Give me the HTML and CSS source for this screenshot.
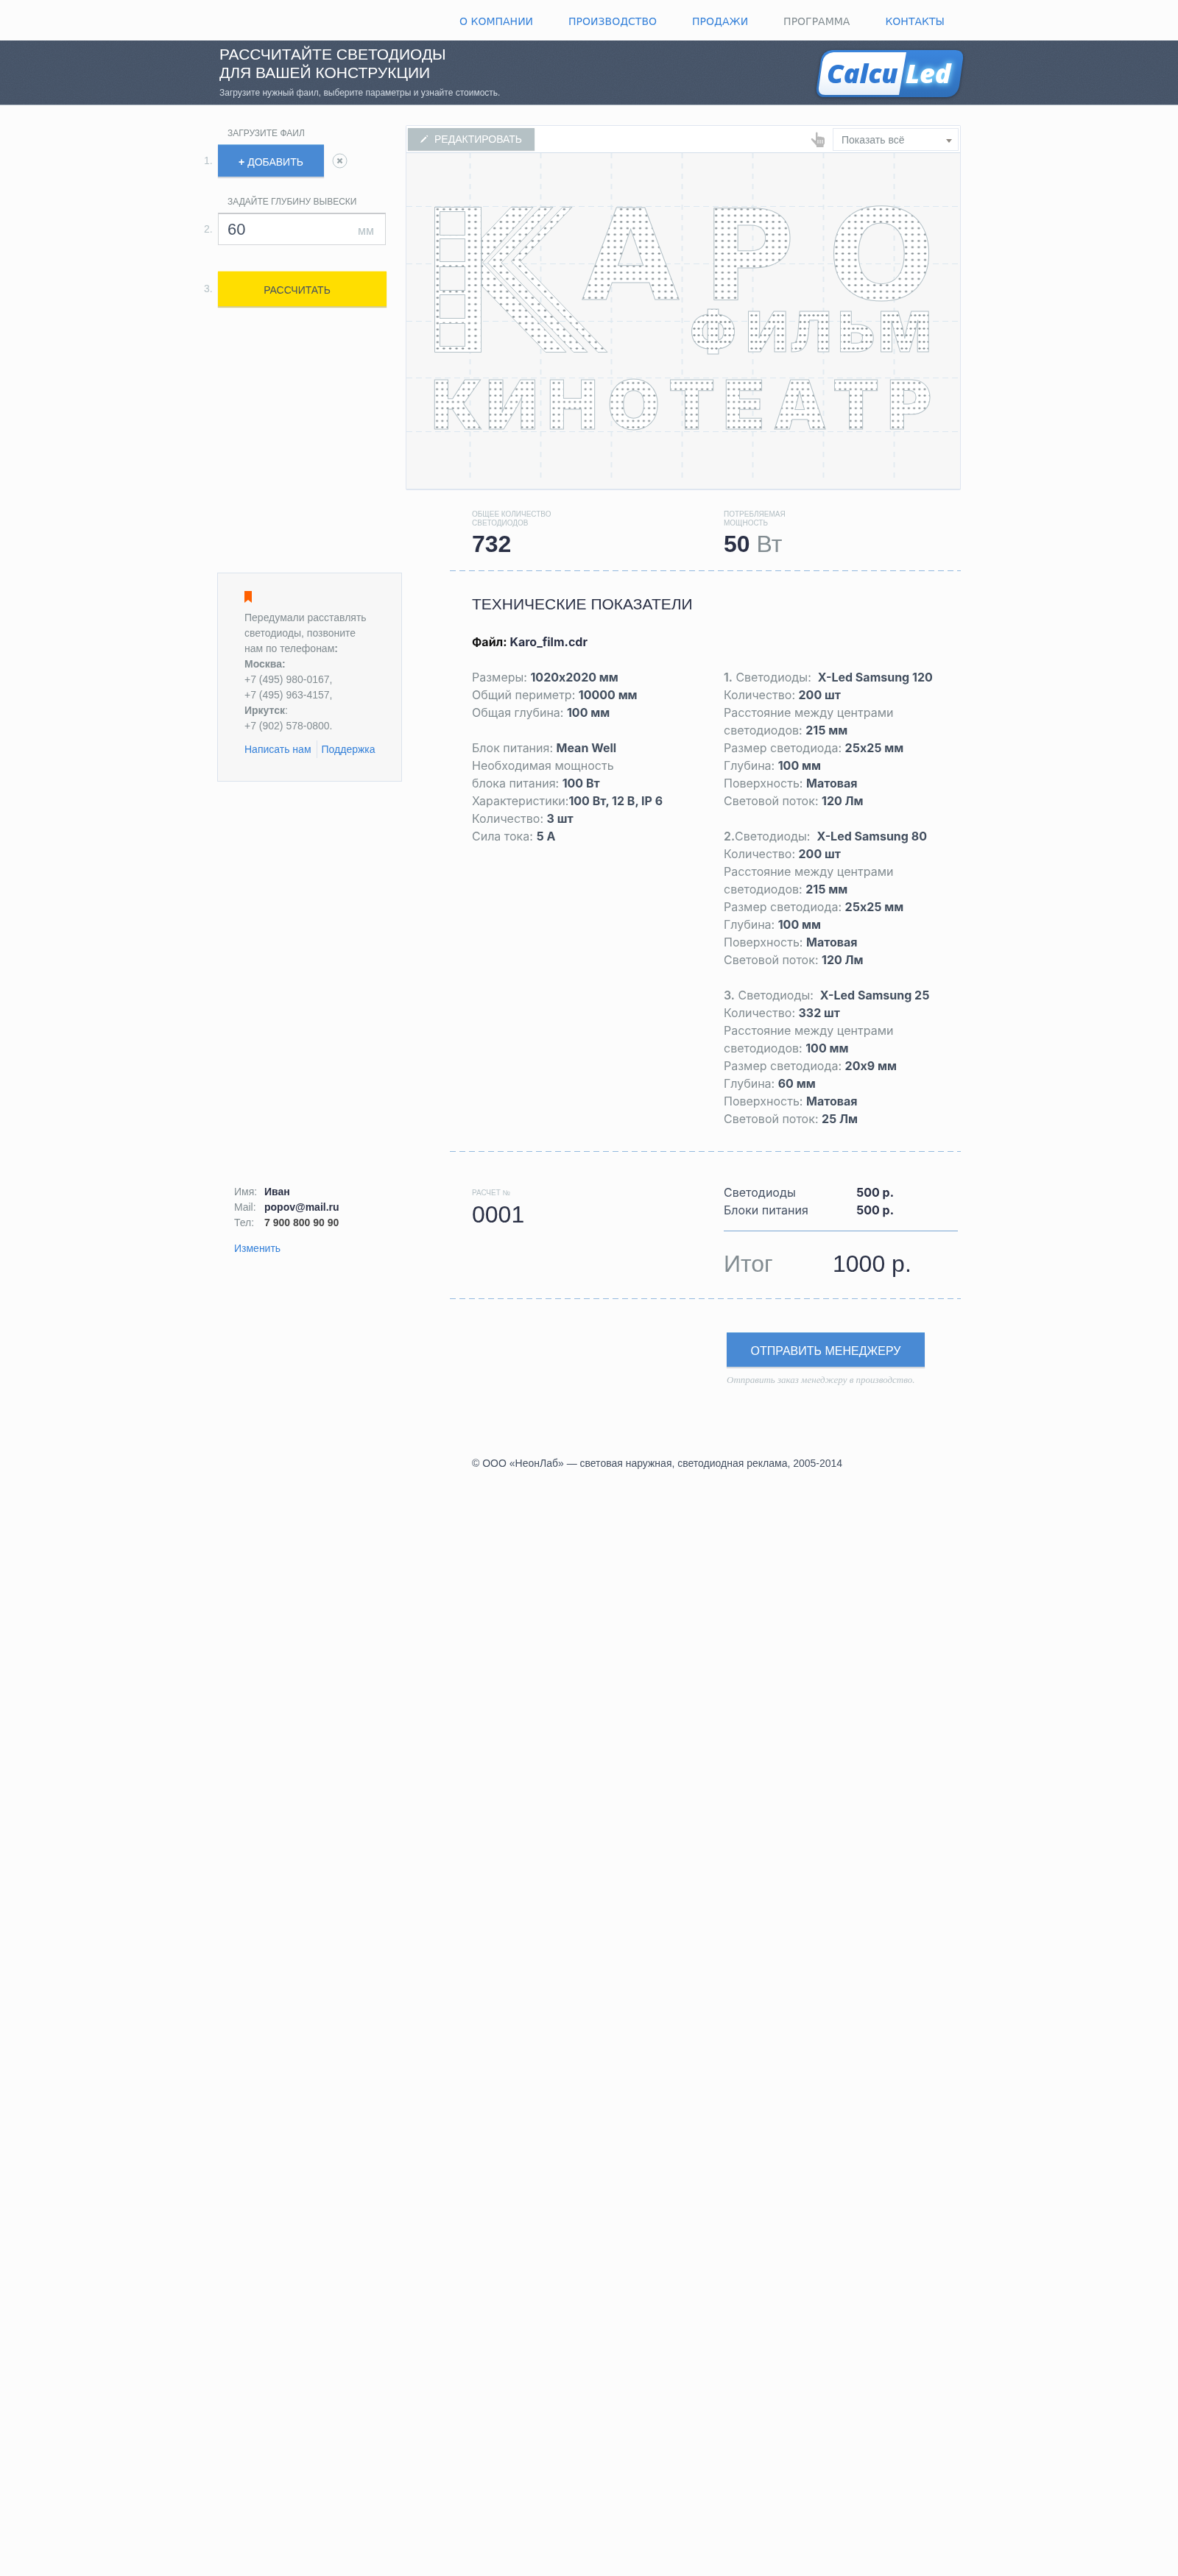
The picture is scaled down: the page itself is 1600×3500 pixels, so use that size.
FILE: index.html
```html
<!DOCTYPE html>
<html lang="ru">
<head>
<meta charset="utf-8">
<meta name="viewport" content="width=device-width, initial-scale=1">
<title>CalcuLed</title>
<link rel="stylesheet" href="styles.css">
</head>
<body>
<nav class="nav wrap">
  <a href="#">О КОМПАНИИ</a>
  <a href="#">ПРОИЗВОДСТВО</a>
  <a href="#">ПРОДАЖИ</a>
  <a href="#" class="current">ПРОГРАММА</a>
  <a href="#">КОНТАКТЫ</a>
</nav>

<header class="hero">
  <svg class="grain" aria-hidden="true">
    <filter id="grain"><feTurbulence type="fractalNoise" baseFrequency="0.7" numOctaves="2"/><feColorMatrix type="saturate" values="0"/></filter>
    <rect width="100%" height="100%" filter="url(#grain)"/>
  </svg>
  <div class="wrap hero-in">
    <div>
      <h1>РАССЧИТАЙТЕ СВЕТОДИОДЫ<br>ДЛЯ ВАШЕЙ КОНСТРУКЦИИ</h1>
      <p>Загрузите нужный фаил, выберите параметры и узнайте стоимость.</p>
    </div>
    <svg class="logo" width="202" height="68" viewBox="0 0 202 68" role="img" aria-label="CalcuLed">
      <defs>
        <linearGradient id="lb" x1="0" y1="0" x2="0" y2="1"><stop offset="0" stop-color="#3b86de"/><stop offset="1" stop-color="#2f6fb9"/></linearGradient>
        <linearGradient id="lw" x1="0" y1="0" x2="0" y2="1"><stop offset=".5" stop-color="#fff"/><stop offset="1" stop-color="#e4eef9"/></linearGradient>
        <filter id="glow" x="-30%" y="-40%" width="160%" height="180%"><feGaussianBlur stdDeviation="3.5"/></filter>
      </defs>
      <path fill="url(#lb)" d="M22 1H190Q201 1 200 13L195 49Q192 64 178 65H12Q0 65 1 52L7 14Q10 2 22 1Z"/>
      <path fill="url(#lw)" d="M24 4H123L113 62H13Q3 62 4 52L9 17Q12 5 24 4Z"/>
      <text class="logo-a" x="15" y="46">Calcu</text>
      <text class="logo-glow" x="122" y="46" filter="url(#glow)">Led</text>
      <text class="logo-b" x="122" y="46">Led</text>
    </svg>
  </div>
</header>

<main class="wrap main">
  <form class="steps">
    <label for="file" class="cap">ЗАГРУЗИТЕ ФАИЛ</label>
    <div class="step">
      <span class="num">1.</span>
      <button type="button" id="file" class="btn add"><b>+</b> ДОБАВИТЬ</button>
      <button type="button" class="clear" aria-label="Удалить">
        <svg width="21" height="21" viewBox="0 0 21 21"><circle cx="10.500" cy="10.500" r="9.500" fill="none" stroke="#b7c4c9"/><path d="M7.500 7.500l6 6m0-6l-6 6" stroke="#9aa6aa" stroke-width="2.200"/></svg>
      </button>
    </div>
    <label for="depth" class="cap">ЗАДАЙТЕ ГЛУБИНУ ВЫВЕСКИ</label>
    <div class="step">
      <span class="num">2.</span>
      <div class="field"><input id="depth" type="text" value="60"><span>мм</span></div>
    </div>
    <div class="step last">
      <span class="num">3.</span>
      <button type="submit" class="btn calc">РАССЧИТАТЬ</button>
    </div>
  </form>

  <div class="result">
    <section class="board">
      <div class="tools">
        <button type="button" class="edit">
          <svg width="12" height="12" viewBox="0 0 12 12"><path d="M1 11l1-2.500 6-6 1.500 1.500-6 6zM9 1.500l1-1 1.500 1.500-1 1z" fill="#fff"/></svg>РЕДАКТИРОВАТЬ</button>
        <svg class="hand" width="20" height="21" viewBox="0 0 20 21"><path fill="#b9b9b9" d="M7 1.500Q8.500-.5 9.500 1.500V7Q11 5.500 12.500 7 14 6 15.500 7.500 18 6.500 19 9.500V16L17.500 18.500V21H8V19L1 11Q0 8.500 2.500 9L6 12 7 12Z"/><path d="M10 11v5M13 11v5M16 11v5" stroke="#fff"/></svg>
        <div class="pick"><select aria-label="Показать"><option>Показать всё</option></select></div>
      </div>
      <svg class="canvas" viewBox="552 208 752 456" role="img" aria-label="КАРО ФИЛЬМ КИНОТЕАТР">
        <defs>
          <pattern id="d1" x="590" y="280" width="8.600" height="8.600" patternUnits="userSpaceOnUse"><rect width="9" height="9" fill="#fff"/><ellipse cx="4.300" cy="4.300" rx="1.700" ry="1.200" fill="#828c91"/></pattern>
          <pattern id="d2" x="1012" y="424" width="6" height="9" patternUnits="userSpaceOnUse"><rect width="6" height="9" fill="#fff"/><ellipse cx="3" cy="4.500" rx="1.600" ry="1.200" fill="#828c91"/></pattern>
          <pattern id="d3" x="590" y="516" width="7.200" height="8.600" patternUnits="userSpaceOnUse"><rect width="8" height="9" fill="#fff"/><ellipse cx="3.600" cy="4.300" rx="1.500" ry="1.300" fill="#828c91"/></pattern>
        </defs>
        <g class="gridv"><path d="M638.500 208v448M734.500 208v448M830.500 208v448M926.500 208v448M1022.500 208v448M1118.500 208v448M1214.500 208v448"/></g>
        <g class="gridh"><path d="M552 280.500h750M552 358.500h750M552 436.500h750M552 513.500h750M552 586.500h750"/></g>
        <g fill="url(#d1)" stroke="#b4c1c7">
          <path d="M654 324L694 281.500H724L655.500 357 769 478.500H741L654 388Z"/>
          <rect x="590.500" y="281.500" width="63" height="197"/>
          <path d="M662.500 357L734 281.500H751L681 357 798 478.500H779Z"/>
          <path d="M694.500 355L764 281.500H777L707 355 825 478.500H812Z"/>
        </g>
        <g fill="#f7f7f7" stroke="#b4c1c7"><rect x="597.500" y="287.500" width="34" height="32"/><rect x="597.500" y="324.500" width="34" height="31"/><rect x="597.500" y="362.500" width="34" height="32"/><rect x="597.500" y="400.500" width="34" height="32"/><rect x="597.500" y="439.500" width="34" height="31"/></g>
        <text class="sign big" x="790 954 1124" y="407">АРО</text>
        <text class="sign mid" x="937 1013 1073 1138 1193" y="478">ФИЛЬМ</text>
        <text class="sign low" x="586 660 743 825 908 982 1050 1131 1205" y="583">КИНОТЕАТР</text>
      </svg>
    </section>
    <div class="stats">
      <div><p class="tiny">ОБЩЕЕ КОЛИЧЕСТВО<br>СВЕТОДИОДОВ</p><p class="value"><b>732</b></p></div>
      <div><p class="tiny">ПОТРЕБЛЯЕМАЯ<br>МОЩНОСТЬ</p><p class="value"><b>50</b> Вт</p></div>
    </div>
  </div>

  <aside class="contact">
    <svg width="10" height="16" viewBox="0 0 10 16"><path d="M0 0h10v16L5 12 0 16z" fill="#ff6000"/></svg>
    <p>Передумали расставлять<br>светодиоды, позвоните<br>нам по телефонам<b>:</b><br><b>Москва:</b><br>+7 (495) 980-0167,<br>+7 (495) 963-4157,<br><b>Иркутск</b>:<br>+7 (902) 578-0800.</p>
    <div class="links"><a href="#">Написать нам</a><a href="#">Поддержка</a></div>
  </aside>

  <section class="block tech">
    <h2>ТЕХНИЧЕСКИЕ ПОКАЗАТЕЛИ</h2>
    <p class="file"><span>Файл:</span> Karo_film.cdr</p>
    <div class="cols">
      <div class="specs">
        <p>Размеры: <b>1020х2020 мм</b><br>Общий периметр: <b>10000 мм</b><br>Общая глубина: <b>100 мм</b></p>
        <p>Блок питания: <b>Mean Well</b><br>Необходимая мощность<br>блока питания: <b>100 Вт</b><br>Характеристики:<b>100 Вт, 12 В, IP 6</b><br>Количество: <b>3 шт</b><br>Сила тока: <b>5 А</b></p>
      </div>
      <div class="specs">
        <p><i>1.</i> Светодиоды: &nbsp;<b>X-Led Samsung 120</b><br>Количество: <b>200 шт</b><br>Расстояние между центрами<br>светодиодов: <b>215 мм</b><br>Размер светодиода: <b>25х25 мм</b><br>Глубина: <b>100 мм</b><br>Поверхность: <b>Матовая</b><br>Световой поток: <b>120 Лм</b></p>
        <p><i>2.</i>Светодиоды: &nbsp;<b>X-Led Samsung 80</b><br>Количество: <b>200 шт</b><br>Расстояние между центрами<br>светодиодов: <b>215 мм</b><br>Размер светодиода: <b>25х25 мм</b><br>Глубина: <b>100 мм</b><br>Поверхность: <b>Матовая</b><br>Световой поток: <b>120 Лм</b></p>
        <p><i>3.</i> Светодиоды: &nbsp;<b>X-Led Samsung 25</b><br>Количество: <b>332 шт</b><br>Расстояние между центрами<br>светодиодов: <b>100 мм</b><br>Размер светодиода: <b>20х9 мм</b><br>Глубина: <b>60 мм</b><br>Поверхность: <b>Матовая</b><br>Световой поток: <b>25 Лм</b></p>
      </div>
    </div>
  </section>

  <section class="user">
    <dl>
      <dt>Имя:</dt><dd>Иван</dd>
      <dt>Mail:</dt><dd>popov@mail.ru</dd>
      <dt>Тел:</dt><dd class="tel">7 900 800 90 90</dd>
    </dl>
    <a href="#">Изменить</a>
  </section>

  <section class="block order cols">
    <div class="bill"><p class="tiny">РАСЧЕТ №</p><p class="number">0001</p></div>
    <div class="price">
      <table>
        <tr><th scope="row">Светодиоды</th><td>500 р.</td></tr>
        <tr><th scope="row">Блоки питания</th><td>500 р.</td></tr>
      </table>
      <p class="total"><span>Итог</span><strong>1000 р.</strong></p>
    </div>
  </section>

  <section class="block send">
    <button type="button" class="btn submit">ОТПРАВИТЬ МЕНЕДЖЕРУ</button>
    <p>Отправить заказ менеджеру в производство.</p>
  </section>

  <footer class="foot">© ООО «НеонЛаб» — световая наружная, светодиодная реклама, 2005-2014</footer>
</main>
</body>
</html>
```
FILE: styles.css
```css
* { box-sizing: border-box; }
body {
  margin: 0;
  min-height: 100vh;
  background: #fcfcfc;
  color: #828c91;
  font: 14px/21px "Liberation Sans", Arial, sans-serif;
}
h1, h2, p, dl, dd { margin: 0; font-weight: 400; }
a { color: #3480d9; text-decoration: none; }
button, input, select { font: inherit; border: 0; border-radius: 0; padding: 0; }
button { cursor: pointer; }
.wrap { max-width: 1050px; margin: 0 auto; padding-right: 20px; }

.nav {
  display: flex;
  gap: 48px;
  height: 55px;
  align-items: center;
  padding: 3px 0 0 349px;
  font: 14px/20px "DejaVu Sans", sans-serif;
  white-space: nowrap;
}
.nav .current { color: #828c91; }

.hero { position: relative; background: #445164; border-bottom: 1px solid #a3adb8; overflow: hidden; }
.grain { position: absolute; inset: 0; width: 100%; height: 100%; opacity: .2; mix-blend-mode: overlay; }
.hero-in {
  position: relative;
  display: flex;
  justify-content: space-between;
  min-height: 87px;
  padding-top: 6px;
  padding-left: 23px;
  padding-right: 15px;
}
.hero h1 { color: #fff; font-size: 21px; line-height: 25px; white-space: nowrap; }
.hero p { margin-top: 6px; color: #d3dbe4; font-size: 12px; line-height: 18px; }
.logo { margin-top: 6px; filter: drop-shadow(0 1px 2px #2b3648); }
.logo text { font: italic 800 36px "Open Sans", sans-serif; }
.logo .logo-a { fill: #3079d3; }
.logo .logo-b { fill: #fff; }
.logo .logo-glow { fill: #8fd8ff; stroke: #6cc4f5; stroke-width: 4px; }

.main { display: grid; grid-template-columns: 276px minmax(0, 1fr); padding-top: 27px; }

.steps { padding-top: 3px; }
.cap { display: block; margin: 0 0 7px 34px; font-size: 12px; line-height: 16px; color: #7f898c; }
.step { display: grid; grid-template-columns: 21px auto auto; justify-content: start; align-items: center; margin-bottom: 26px; }
.step.last { margin-top: 35px; }
.num { color: #b5c1c6; padding-left: 2px; }
.btn { display: block; text-align: center; color: #fff; }
.add { width: 144px; height: 44px; background: #498ad4; border-top: 1px solid #8fbfe6; box-shadow: 0 2px 1px #d3d7dc; padding-top: 4px; }
.clear { background: none; margin-left: 11px; height: 21px; }
.clear svg { display: block; }
.field { display: flex; align-items: center; width: 228px; height: 44px; background: #fff; border: 1px solid #d3d5d8; border-top: 2px solid #c9cbce; padding: 0 15px 0 12px; }
.field input { flex: 1; min-width: 0; background: none; color: #445062; font-size: 22px; }
.field span { color: #b5c1c6; font-size: 16px; padding-top: 4px; }
.calc { width: 229px; height: 48px; background: #ffde00; color: #445062; border-top: 1px solid #fff0a0; box-shadow: 0 2px 1px #d6cc8c; padding: 4px 14px 0 0; }

.board { border: 1px solid #dfe6f0; border-bottom: 2px solid #dfe6f0; border-radius: 2px; background: #f7f7f7; }
.tools { display: flex; align-items: center; height: 37px; padding: 0 2px; background: #fff; border-bottom: 1px solid #d3deea; }
.edit { display: flex; align-items: center; gap: 8px; width: 172px; height: 30px; padding: 0 0 0 16px; background: #b5c1c5; color: #fff; box-shadow: 0 1px 1px #c4cbce; }
.hand { margin-left: auto; }
.pick { position: relative; width: 171px; height: 31px; margin-left: 10px; border: 1px solid #e4e9f1; }
.pick::after { content: ""; position: absolute; right: 8px; top: 14px; border: 4px solid transparent; border-top: 5px solid #8f8a84; border-bottom: 0; }
.pick select { appearance: none; width: 100%; height: 100%; background: #fff; color: #828c91; padding: 3px 11px 0; }
.canvas { display: block; width: 100%; }
.gridv { fill: none; stroke: #e3ebf1; stroke-width: 2; stroke-dasharray: 7 7; }
.gridh { fill: none; stroke: #dbe7f0; stroke-dasharray: 8 5; }
.sign { stroke: #b4c1c7; stroke-width: 1px; }
.big { font: bold 172px "DejaVu Sans", sans-serif; fill: url(#d1); }
.mid { font: 900 75px Inter, sans-serif; fill: url(#d2); }
.low { font: 900 92px Inter, sans-serif; fill: url(#d3); }

.stats { display: grid; grid-template-columns: 342px 1fr; padding: 27px 0 18px 90px; }
.tiny { color: #b3bfc4; font-size: 10px; line-height: 12px; }
.value { margin-top: 4px; font-size: 32px; line-height: 36px; }
.value b { color: #2a3045; }

.contact { width: 251px; height: max-content; margin: 3px 0 0 20px; padding: 24px 30px 31px 36px; background: #f7f7f7; border: 1px solid #dbe3ed; white-space: nowrap; }
.contact svg { display: block; }
.contact p { margin-top: 10px; }
.links { display: flex; margin-top: 9px; line-height: 24px; }
.links a + a { margin-left: 7px; padding-left: 6px; border-left: 1px solid #dbe3ed; }

.block {
  margin-left: 60px;
  padding-left: 30px;
  background: repeating-linear-gradient(90deg, #93b9df 0 8px, transparent 8px 13px) top / 100% 1px no-repeat;
}
.cols { display: grid; grid-template-columns: 342px 1fr; }
.tech { padding-top: 33px; padding-bottom: 32px; }
h2 { color: #2a3045; font-size: 21px; line-height: 26px; }
.file, .specs, .price { font: 16px/24px Inter, sans-serif; }
.file { margin: 26px 0 24px; color: #2a3045; font-weight: 700; }
.file span { color: #111; }
.specs { white-space: nowrap; }
.specs p + p { margin-top: 24px; }
.specs b { color: #434f5f; font-weight: 700; }
.specs i { font-style: normal; font-weight: 600; }

.user { padding: 45px 0 0 43px; }
dl { display: grid; grid-template-columns: 41px 1fr; margin-bottom: 14px; }
dd { color: #2a3045; font-weight: 700; }
.tel { color: #444; }
.order { padding-bottom: 29px; }
.bill { padding-top: 51px; }
.number { margin-top: 5px; color: #2a3045; font-size: 32px; line-height: 36px; }
.price { padding-top: 44px; }
.price table { width: 100%; border-collapse: collapse; }
.price th { width: 180px; padding: 0; text-align: left; font-weight: 400; color: #445062; }
.price td { padding: 0; font-weight: 700; color: #2a3045; }
.total { display: flex; margin: 16px 4px 0 0; padding-top: 26px; border-top: 1px solid #79a5d3; font: 32px/36px "Liberation Sans", Arial, sans-serif; }
.total span { width: 148px; }
.total strong { font-weight: 400; color: #2a3045; }

.send { grid-column: 2; padding: 46px 0 0 376px; }
.submit { width: 269px; height: 47px; background: #498ad4; border-top: 1px solid #8fbfe6; box-shadow: 0 2px 1px #d3d7dc; padding-top: 3px; font-size: 16px; }
.send p { margin-top: 10px; color: #b5bfc4; font: italic 13px/16px "Liberation Serif", serif; white-space: nowrap; }
.foot { grid-column: 2; margin: 95px 0 60px 90px; color: #434f60; }
```
